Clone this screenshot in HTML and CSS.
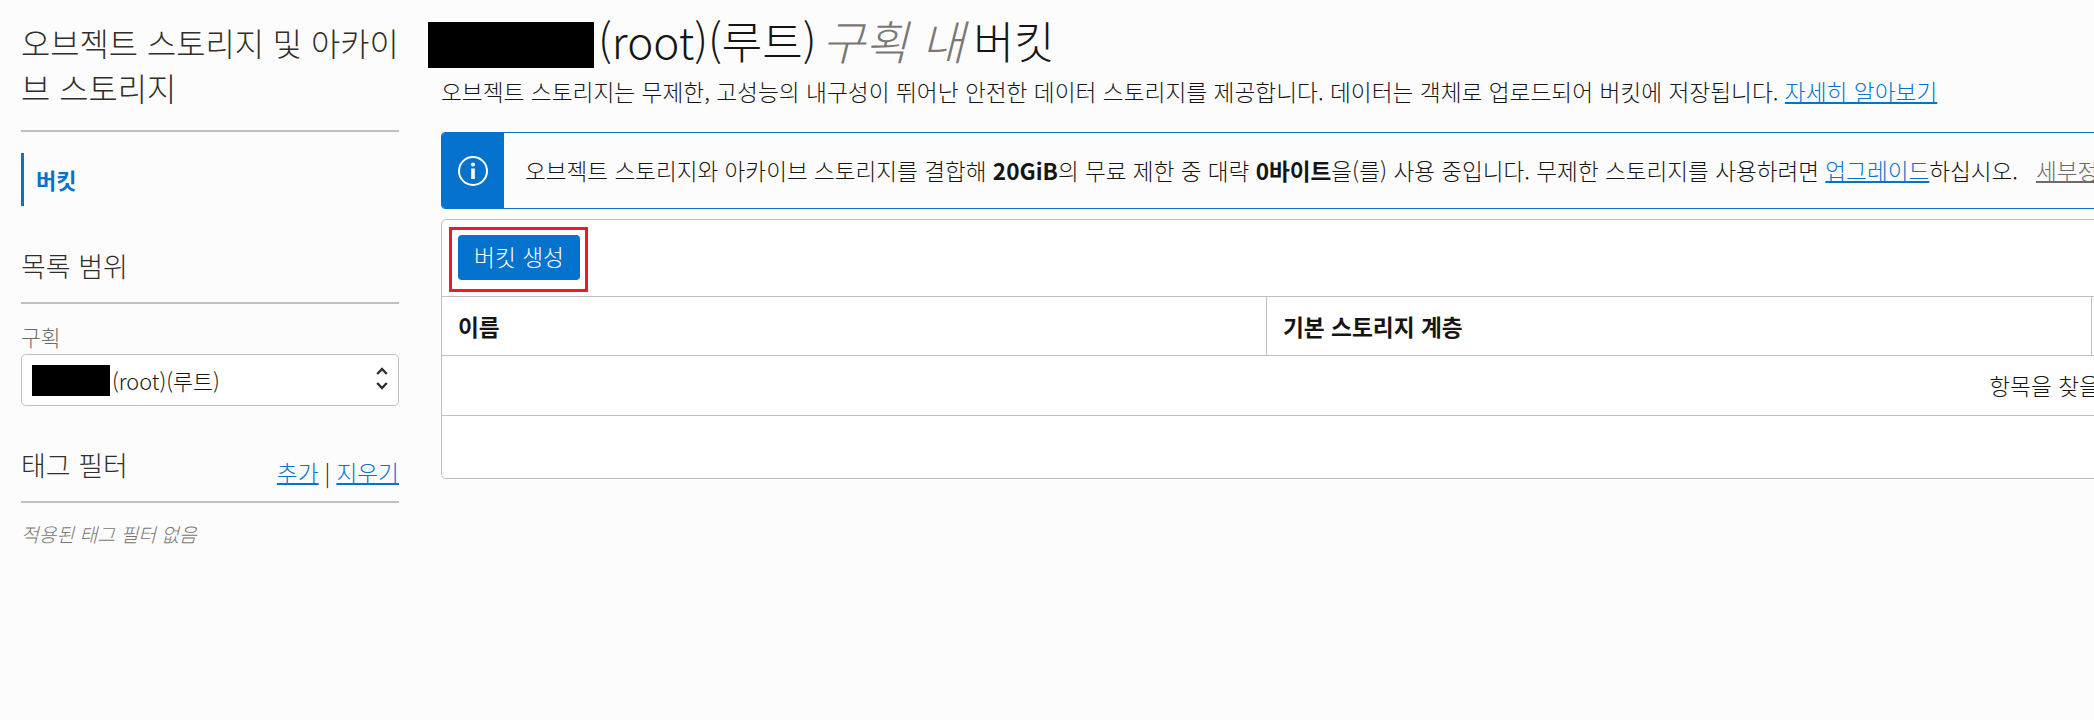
FILE: index.html
```html
<!DOCTYPE html>
<html lang="ko">
  <head>
    <meta charset="UTF-8" />
    <meta name="viewport" content="width=device-width, initial-scale=1.0" />
    <title>버킷</title>
    <link rel="stylesheet" href="styles.css">
  </head>
  <body>
    <div class="page">
      <aside class="sidebar">
        <h2 class="side-title">오브젝트 스토리지 및 아카이브 스토리지</h2>
        <nav class="side-nav">
          <a class="side-nav-item" href="#">버킷</a>
        </nav>
        <h3 class="side-heading scope-heading">목록 범위</h3>
        <label class="field-label">구획</label>
        <div class="select">
          <span class="redacted redacted-small"></span>
          <span class="select-text">(root)(루트)</span>
          <svg class="select-arrows" width="12" height="30" viewBox="0 0 12 30" fill="none" stroke="#312d2a" stroke-width="2.4">
            <polyline points="1.2 9 6 4 10.8 9"></polyline>
            <polyline points="1.2 18 6 23 10.8 18"></polyline>
          </svg>
        </div>
        <div class="tag-head">
          <h3 class="side-heading">태그 필터</h3>
          <div class="tag-links"><a href="#">추가</a><span class="sep">|</span><a href="#">지우기</a></div>
        </div>
        <p class="no-filter">적용된 태그 필터 없음</p>
      </aside>
      <main class="main">
        <h1 class="page-title">
          <span class="redacted redacted-big"></span>
          <span>(root)(루트)</span>
          <em class="title-in">구획 내</em>
          <span>버킷</span>
        </h1>
        <div class="content">
          <p class="desc">오브젝트 스토리지는 무제한, 고성능의 내구성이 뛰어난 안전한 데이터 스토리지를 제공합니다. 데이터는 객체로 업로드되어 버킷에 저장됩니다. <a href="#">자세히 알아보기</a></p>
          <div class="notice">
            <div class="notice-icon">
              <svg width="30" height="30" viewBox="0 0 30 30" fill="none" stroke="#fff" stroke-width="2">
                <circle cx="15" cy="15" r="14"></circle>
                <circle cx="15" cy="8.5" r="2" fill="#fff" stroke="none"></circle>
                <rect x="13.2" y="12.5" width="3.6" height="10.5" fill="#fff" stroke="none"></rect>
              </svg>
            </div>
            <p class="notice-text">오브젝트 스토리지와 아카이브 스토리지를 결합해 <b>20GiB</b>의 무료 제한 중 대략 <b>0바이트</b>을(를) 사용 중입니다. 무제한 스토리지를 사용하려면 <a href="#">업그레이드</a>하십시오.<a class="more" href="#">세부정보</a></p>
          </div>
          <section class="card">
            <div class="toolbar">
              <div class="highlight">
                <button class="btn-primary">버킷 생성</button>
              </div>
            </div>
            <div class="table-head">
              <div class="col col-name">이름</div>
              <div class="col col-tier">기본 스토리지 계층</div>
              <div class="col"></div>
            </div>
            <div class="table-empty">항목을 찾을 수 없습니다.</div>
            <div class="table-foot"></div>
          </section>
        </div>
      </main>
    </div>
  </body>
</html>
```

FILE: styles.css
```css
html, body {
  margin: 0;
  height: 100%;
  overflow: hidden;
}
body {
  font-family: "Noto Sans CJK KR", "Liberation Sans", sans-serif;
  background-color: #fcfcfc;
  color: #161513;
  font-size: 22.7px;
}
a {
  color: #0572ce;
  text-decoration: underline;
  text-decoration-thickness: 2px;
}
.page {
  display: flex;
  align-items: flex-start;
  width: 3800px;
}
.sidebar {
  width: 378px;
  margin-left: 21px;
  flex-shrink: 0;
}
.side-title {
  font-size: 31.8px;
  font-weight: 300;
  line-height: 45px;
  margin: 0;
  padding: 20px 0 20px;
  border-bottom: 2px solid #bcc0c6;
  word-break: break-all;
  color: #312d2a;
}
.side-nav {
  margin-top: 21px;
}
.side-nav-item {
  box-sizing: border-box;
  display: flex;
  align-items: center;
  height: 53px;
  border-left: 3px solid #0572ce;
  padding: 0 0 2px 12px;
  font-size: 22px;
  font-weight: 700;
  color: #0572ce;
  text-decoration: none;
}
.side-heading {
  font-size: 27px;
  font-weight: 300;
  line-height: 36px;
  margin: 0;
  color: #312d2a;
}
.scope-heading {
  margin-top: 42px;
  padding-bottom: 18px;
  border-bottom: 2px solid #bcc0c6;
}
.field-label {
  display: block;
  font-size: 21.5px;
  font-weight: 300;
  line-height: 28px;
  margin-top: 19px;
  color: #6f6a66;
}
.select {
  box-sizing: border-box;
  display: flex;
  align-items: center;
  height: 52px;
  margin-top: 3px;
  padding: 0 10px;
  background-color: #fff;
  border: 1px solid #bcc0c6;
  border-radius: 5px;
}
.select-text {
  font-size: 21.7px;
  font-weight: 300;
  margin-left: 2px;
}
.select-arrows {
  margin-left: auto;
}
.redacted {
  display: block;
  background-color: #000;
  flex-shrink: 0;
}
.redacted-small {
  width: 78px;
  height: 31px;
}
.redacted-big {
  width: 166px;
  height: 46px;
}
.tag-head {
  display: flex;
  justify-content: space-between;
  align-items: flex-end;
  margin-top: 41px;
  padding-bottom: 18px;
  border-bottom: 2px solid #bcc0c6;
}
.tag-links {
  font-size: 22.7px;
  font-weight: 300;
  line-height: 30px;
  margin-bottom: -5px;
}
.sep {
  margin: 0 6px;
}
.no-filter {
  font-size: 19.3px;
  font-weight: 300;
  font-style: italic;
  color: #7a7672;
  margin: 17px 0 0;
}
.main {
  margin-left: 29px;
  flex-grow: 1;
}
.page-title {
  display: flex;
  align-items: flex-start;
  gap: 4px;
  height: 46px;
  margin: 22px 0 0;
  font-size: 44px;
  font-weight: 300;
  line-height: 36px;
  white-space: nowrap;
}
.title-in {
  font-size: 47px;
  color: #7a7672;
  margin: 0 5px 0 1px;
}
.content {
  margin-left: 13px;
}
.desc {
  font-size: 22.7px;
  font-weight: 300;
  line-height: 30px;
  margin: 9px 0 0;
  white-space: nowrap;
}
.notice {
  box-sizing: border-box;
  display: flex;
  align-items: center;
  height: 77px;
  width: 3300px;
  margin-top: 25px;
  border: 1px solid #0572ce;
  border-radius: 4px;
  overflow: hidden;
}
.notice-icon {
  display: flex;
  justify-content: center;
  align-items: center;
  width: 62px;
  height: 100%;
  background-color: #0572ce;
}
.notice-text {
  font-size: 22.58px;
  font-weight: 300;
  margin: 0 0 0 21px;
  white-space: nowrap;
}
.notice-text b {
  font-weight: 700;
}
.more {
  color: #6f6a66;
  margin-left: 18px;
}
.card {
  box-sizing: border-box;
  width: 3330px;
  height: 260px;
  margin-top: 10px;
  background-color: #fff;
  border: 1px solid #bcc0c6;
  border-radius: 5px;
}
.toolbar {
  height: 76px;
  box-sizing: border-box;
  padding: 7px 7px 0;
}
.highlight {
  display: flex;
  width: fit-content;
  padding: 5px 5px 9px 6px;
  border: 3px solid #ed1c24;
}
.btn-primary {
  display: block;
  width: 122px;
  height: 45px;
  padding: 0 0 2px;
  border: none;
  border-radius: 4px;
  background-color: #0572ce;
  color: #fff;
  font-family: inherit;
  font-size: 22.7px;
  font-weight: 300;
}
.table-head {
  display: flex;
  height: 60px;
  box-sizing: border-box;
  border-top: 1px solid #bcc0c6;
  border-bottom: 1px solid #bcc0c6;
}
.col {
  display: flex;
  align-items: center;
  padding-left: 16px;
  font-size: 22.7px;
  font-weight: 700;
}
.col-name {
  width: 808px;
  border-right: 1px solid #bcc0c6;
}
.col-tier {
  width: 808px;
  border-right: 1px solid #bcc0c6;
}
.table-empty {
  display: flex;
  justify-content: center;
  align-items: center;
  height: 59px;
  border-bottom: 1px solid #bcc0c6;
  font-size: 22.7px;
  font-weight: 300;
}
.table-foot {
  height: 61px;
}
```
